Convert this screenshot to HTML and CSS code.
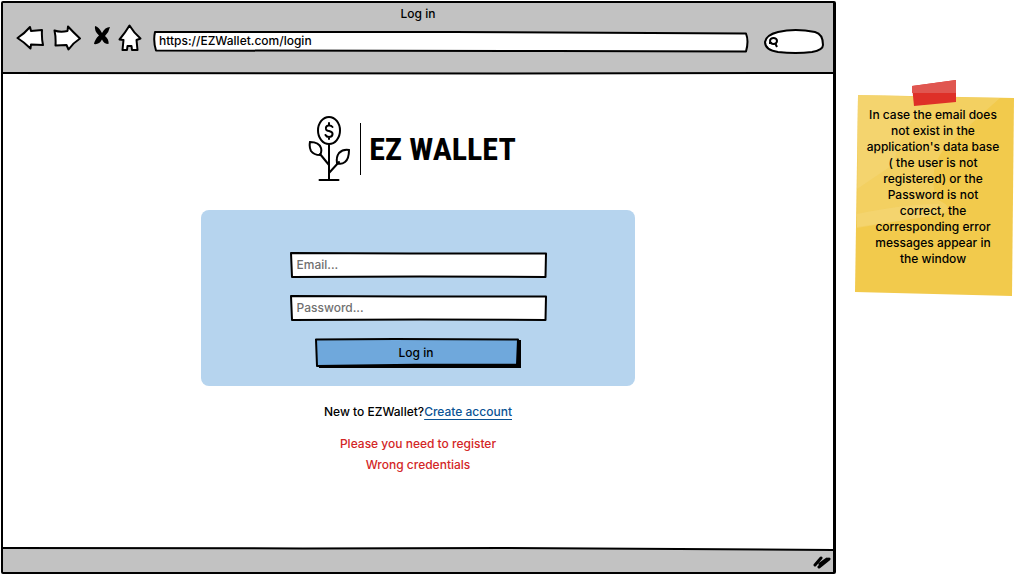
FILE: index.html
```html
<!DOCTYPE html>
<html lang="en">
<head>
<meta charset="utf-8">
<meta name="viewport" content="width=device-width, initial-scale=1">
<title>Log in</title>
<link rel="stylesheet" href="styles.css">
</head>
<body>
<div class="board">
  <div class="window">
    <header class="chrome">
      <svg class="sketch" viewBox="0 0 830 70" preserveAspectRatio="none" aria-hidden="true"><path class="rule" d="M0 69 L500 69.5 L830 69"/></svg>
      <h1 class="title">Log in</h1>
      <div class="toolbar">
        <nav class="nav" aria-label="Browser">
          <button class="tool" type="button" aria-label="Back"><svg width="28" height="26" viewBox="0 0 28 26"><path d="M1.500 13 Q8 9 14 2 L15 6 L26 5 Q25.500 13 27 20 L15 19.500 L14.500 23.500 Q8 17 1.500 13 Z"/></svg></button>
          <button class="tool" type="button" aria-label="Forward"><svg width="28" height="26" viewBox="0 0 28 26"><path d="M1.500 5.500 Q7 7.500 14.500 6 L15 1.500 Q20 7 27 13.500 Q20 18 15.500 24.500 L13.500 20 L2.500 20.500 Q3 12 1.500 5.500 Z"/></svg></button>
          <button class="tool stop" type="button" aria-label="Stop"><svg width="18" height="22" viewBox="0 0 18 22"><path class="ink" d="M2 1 Q6 2 9 8 Q12 2 17 2 Q16 7 12 11 Q16 14 15.500 19 Q11 19 9 14.500 Q6 20 1 19 Q2 14 6 10.500 Q1 6 2 1 Z"/></svg></button>
          <button class="tool home" type="button" aria-label="Home"><svg width="24" height="28" viewBox="0 0 24 28"><path d="M11.500 1.500 Q7 9 1.500 15.500 L5.500 16 L4.500 26 L9 26 L9.500 22 L13.500 22 L14 26 L19.500 26 L18.500 16 L22.500 14.500 Q16 9 11.500 1.500 Z"/></svg></button>
        </nav>
        <div class="address">
          <svg class="sketch" viewBox="0 0 595 22" preserveAspectRatio="none" aria-hidden="true"><path class="box" d="M2 1 L300 1 L592 2.500 Q595 10 592 20.500 L400 20 L3 19.500 Q0 10 2 1 Z"/></svg>
          <input class="field url" type="text" aria-label="Address" value="https://EZWallet.com/login">
        </div>
        <div class="search">
          <svg class="sketch" viewBox="0 0 60 25" preserveAspectRatio="none" aria-hidden="true"><path class="box" d="M14 3 Q31 -1 51 3 Q59 5 59 16 Q59 21 48 23 Q32 25 14 23 Q1 21 1 13 Q2 6 14 3 Z"/></svg>
          <svg class="lens" width="12" height="13" viewBox="0 0 12 13" aria-hidden="true"><ellipse cx="5.500" cy="5" rx="3.500" ry="3"/><path d="M1 7 L4 7 M7 7 L9 11"/></svg>
          <input class="field query" type="search" aria-label="Search">
        </div>
      </div>
    </header>
    <main class="page">
      <div class="brand">
        <svg class="plant" width="42" height="68" viewBox="0 0 42 68" aria-hidden="true">
          <ellipse cx="21" cy="15.500" rx="11" ry="13.500"/>
          <path d="M21 29 V64 M11.500 65 H30.500 M21 50 L12 39 M21 58 L31 47"/>
          <path d="M2 27 Q11 27 13 33 Q14 37 12 40 Q6 40 3 36 Q1 32 2 27 Z"/>
          <path d="M41 35 Q41 44 37 47 Q33 50 29 48 Q28 42 31 38 Q35 34 41 35 Z"/>
          <path class="dollar" d="M24.500 12 Q23 10 20.500 10.500 Q17.500 11 18 14 Q18.500 16 21 16 Q25 17 24.500 19.500 Q24 22 21 22 Q18.500 22 17.500 20 M21 8 V10.500 M21 22 V24"/>
        </svg>
        <span class="divider"></span>
        <span class="name">EZ WALLET</span>
      </div>
      <form class="card">
        <div class="entry">
          <svg class="sketch" viewBox="0 0 257 26" preserveAspectRatio="none" aria-hidden="true"><path class="box" d="M1 1 L120 1.500 L256 1.500 L255.500 25 L130 24.500 L2 25 Z"/></svg>
          <input class="field" type="email" aria-label="Email" placeholder="Email...">
        </div>
        <div class="entry">
          <svg class="sketch" viewBox="0 0 257 26" preserveAspectRatio="none" aria-hidden="true"><path class="box" d="M1 1 L120 1.500 L256 1.500 L255.500 25 L130 24.500 L2 25 Z"/></svg>
          <input class="field" type="password" aria-label="Password" placeholder="Password...">
        </div>
        <button class="submit" type="button">
          <svg class="sketch" viewBox="0 0 206 30" preserveAspectRatio="none" aria-hidden="true"><path class="shadow" d="M3 4 L206 2 L206 29 L4 29 Z"/><path class="box blue" d="M1 1.500 L80 1 L203 1.500 L202 26 L100 26 L2 27 Z"/></svg>
          <span class="caption">Log in</span>
        </button>
      </form>
      <p class="signup">New to EZWallet?<a class="link" href="#">Create account</a></p>
      <div class="errors" role="alert">
        <p class="error">Please you need to register</p>
        <p class="error">Wrong credentials</p>
      </div>
    </main>
    <footer class="status">
      <svg class="sketch" viewBox="0 0 830 26" preserveAspectRatio="none" aria-hidden="true"><path class="fill" d="M0 1 L500 1 L830 3 V26 H0 Z"/><path class="rule" d="M0 1 L300 1.500 L500 1 L830 3"/></svg>
      <svg class="grip" width="18" height="14" viewBox="0 0 18 14" aria-hidden="true"><path d="M2 10 L8 3 M6 12 L16 4 M7 9 L14 4"/></svg>
    </footer>
  </div>
  <aside class="note">
    <svg class="sketch" viewBox="0 0 160 202" preserveAspectRatio="none" aria-hidden="true">
      <path class="paper" d="M4 1 L160 4 L158 202 L1 198 Z"/>
      <path class="sheen" d="M4 1 L146 4 Q122 25 90 55 Q74 75 82 105 Q105 115 85 121 L3 133 Z"/>
      <path class="sheen" d="M4 1 L78 3 Q45 35 40 70 L3 95 Z M3 120 Q50 110 85 110 L82 121 L3 134 Z"/>
    </svg>
    <svg class="tape" width="46" height="26" viewBox="0 0 46 26" aria-hidden="true"><path class="tape-base" d="M1 6 L45 0 L45 22 L3 26 Z"/><path class="tape-light" d="M1 6 L45 0 L45 13 L1 13 Z"/></svg>
    <p class="remark">In case the email does<br>not exist in the<br>application's data base<br>( the user is not<br>registered) or the<br>Password is not<br>correct, the<br>corresponding error<br>messages appear in<br>the window</p>
  </aside>
</div>
</body>
</html>
```
FILE: styles.css
```css
* { box-sizing: border-box; }
body {
  margin: 0;
  background: #fff;
  color: #000;
  font: 500 12px/16px Inter, "Liberation Sans", sans-serif;
}
h1, p { margin: 0; }
button, input { font: inherit; color: inherit; }

.board {
  display: flex;
  align-items: flex-start;
  gap: 18px;
  min-height: 100vh;
  padding: 1px 0 1px 1px;
}
.window {
  flex: 1;
  align-self: stretch;
  display: flex;
  flex-direction: column;
  border: 2px solid #000;
  border-right-width: 3px;
  border-radius: 2px;
}

.sketch {
  position: absolute;
  inset: 0;
  width: 100%;
  height: 100%;
  overflow: visible;
  pointer-events: none;
}
.sketch path { vector-effect: non-scaling-stroke; }
.rule { fill: none; stroke: #000; stroke-width: 2px; }
.box { fill: #fff; stroke: #000; stroke-width: 2px; stroke-linejoin: round; }
.blue { fill: #6fa8dc; }
.shadow { fill: #000; }

.chrome {
  position: relative;
  height: 71px;
  background: #c2c2c2;
}
.title {
  padding-top: 3px;
  text-align: center;
  font-size: 12px;
  font-weight: 500;
}
.toolbar {
  display: flex;
  align-items: center;
  gap: 11px;
  padding: 0 9px 0 13px;
}
.nav { display: flex; align-items: center; gap: 9px; height: 30px; }
.tool { display: flex; padding: 0; border: 0; background: none; }
.tool path { fill: #fff; stroke: #000; stroke-width: 2px; stroke-linejoin: round; }
.tool .ink { fill: #000; stroke: none; }
.stop { margin: 0 -2px 4px 3px; }
.address { position: relative; flex: 1; height: 22px; margin-top: 8px; }
.search { position: relative; width: 60px; height: 25px; margin: 7px 0 0 4px; }
.lens { position: absolute; left: 4px; top: 7px; }
.lens * { fill: none; stroke: #000; stroke-width: 2px; }

.field {
  position: relative;
  display: block;
  width: 100%;
  height: 100%;
  padding: 0 7px 2px;
  border: 0;
  background: none;
  outline: none;
}
.field::placeholder { color: #707070; opacity: 1; }
.url { padding: 0 6px 4px; }
.query { padding-left: 18px; appearance: none; }

.page {
  flex: 1;
  display: flex;
  flex-direction: column;
  align-items: center;
  padding: 41px 16px 24px;
}
.brand { display: flex; align-items: center; gap: 8px; padding-right: 12px; }
.plant * { fill: none; stroke: #000; stroke-width: 2px; stroke-linecap: round; }
.divider { width: 1px; height: 52px; margin-left: 2px; background: #000; }
.name {
  font: 700 32px/40px "Liberation Sans Narrow", "Roboto Condensed", Roboto, sans-serif;
}
.card {
  display: flex;
  flex-direction: column;
  align-items: center;
  width: 100%;
  max-width: 434px;
  margin-top: 27px;
  padding: 42px 24px 17px;
  border-radius: 8px;
  background: #b6d4ee;
}
.entry { position: relative; width: 100%; max-width: 257px; height: 26px; margin-bottom: 17px; }
.submit {
  position: relative;
  width: 206px;
  height: 31px;
  padding: 0 4px 2px 0;
  border: 0;
  background: none;
}
.caption { position: relative; }
.signup { margin-top: 18px; }
.link { color: #0b5394; text-underline-offset: 3px; }
.errors {
  display: grid;
  gap: 5px;
  margin-top: 16px;
  text-align: center;
  color: #d32626;
}

.status {
  position: relative;
  display: flex;
  justify-content: flex-end;
  align-items: center;
  height: 25px;
  padding: 4px 2px 0;
}
.fill { fill: #c2c2c2; }
.grip { position: relative; }
.grip path { fill: none; stroke: #000; stroke-width: 3px; stroke-linecap: round; }

.note {
  position: relative;
  width: 160px;
  min-height: 202px;
  margin-top: 93px;
  padding: 13px 2px 28px 0;
  text-align: center;
}
.paper { fill: #f2ca4c; }
.sheen { fill: #f6da83; opacity: 0.4; }
.tape { position: absolute; left: 57px; top: -14px; }
.tape-base { fill: #de3028; }
.tape-light { fill: #e05650; }
.remark { position: relative; }
```
